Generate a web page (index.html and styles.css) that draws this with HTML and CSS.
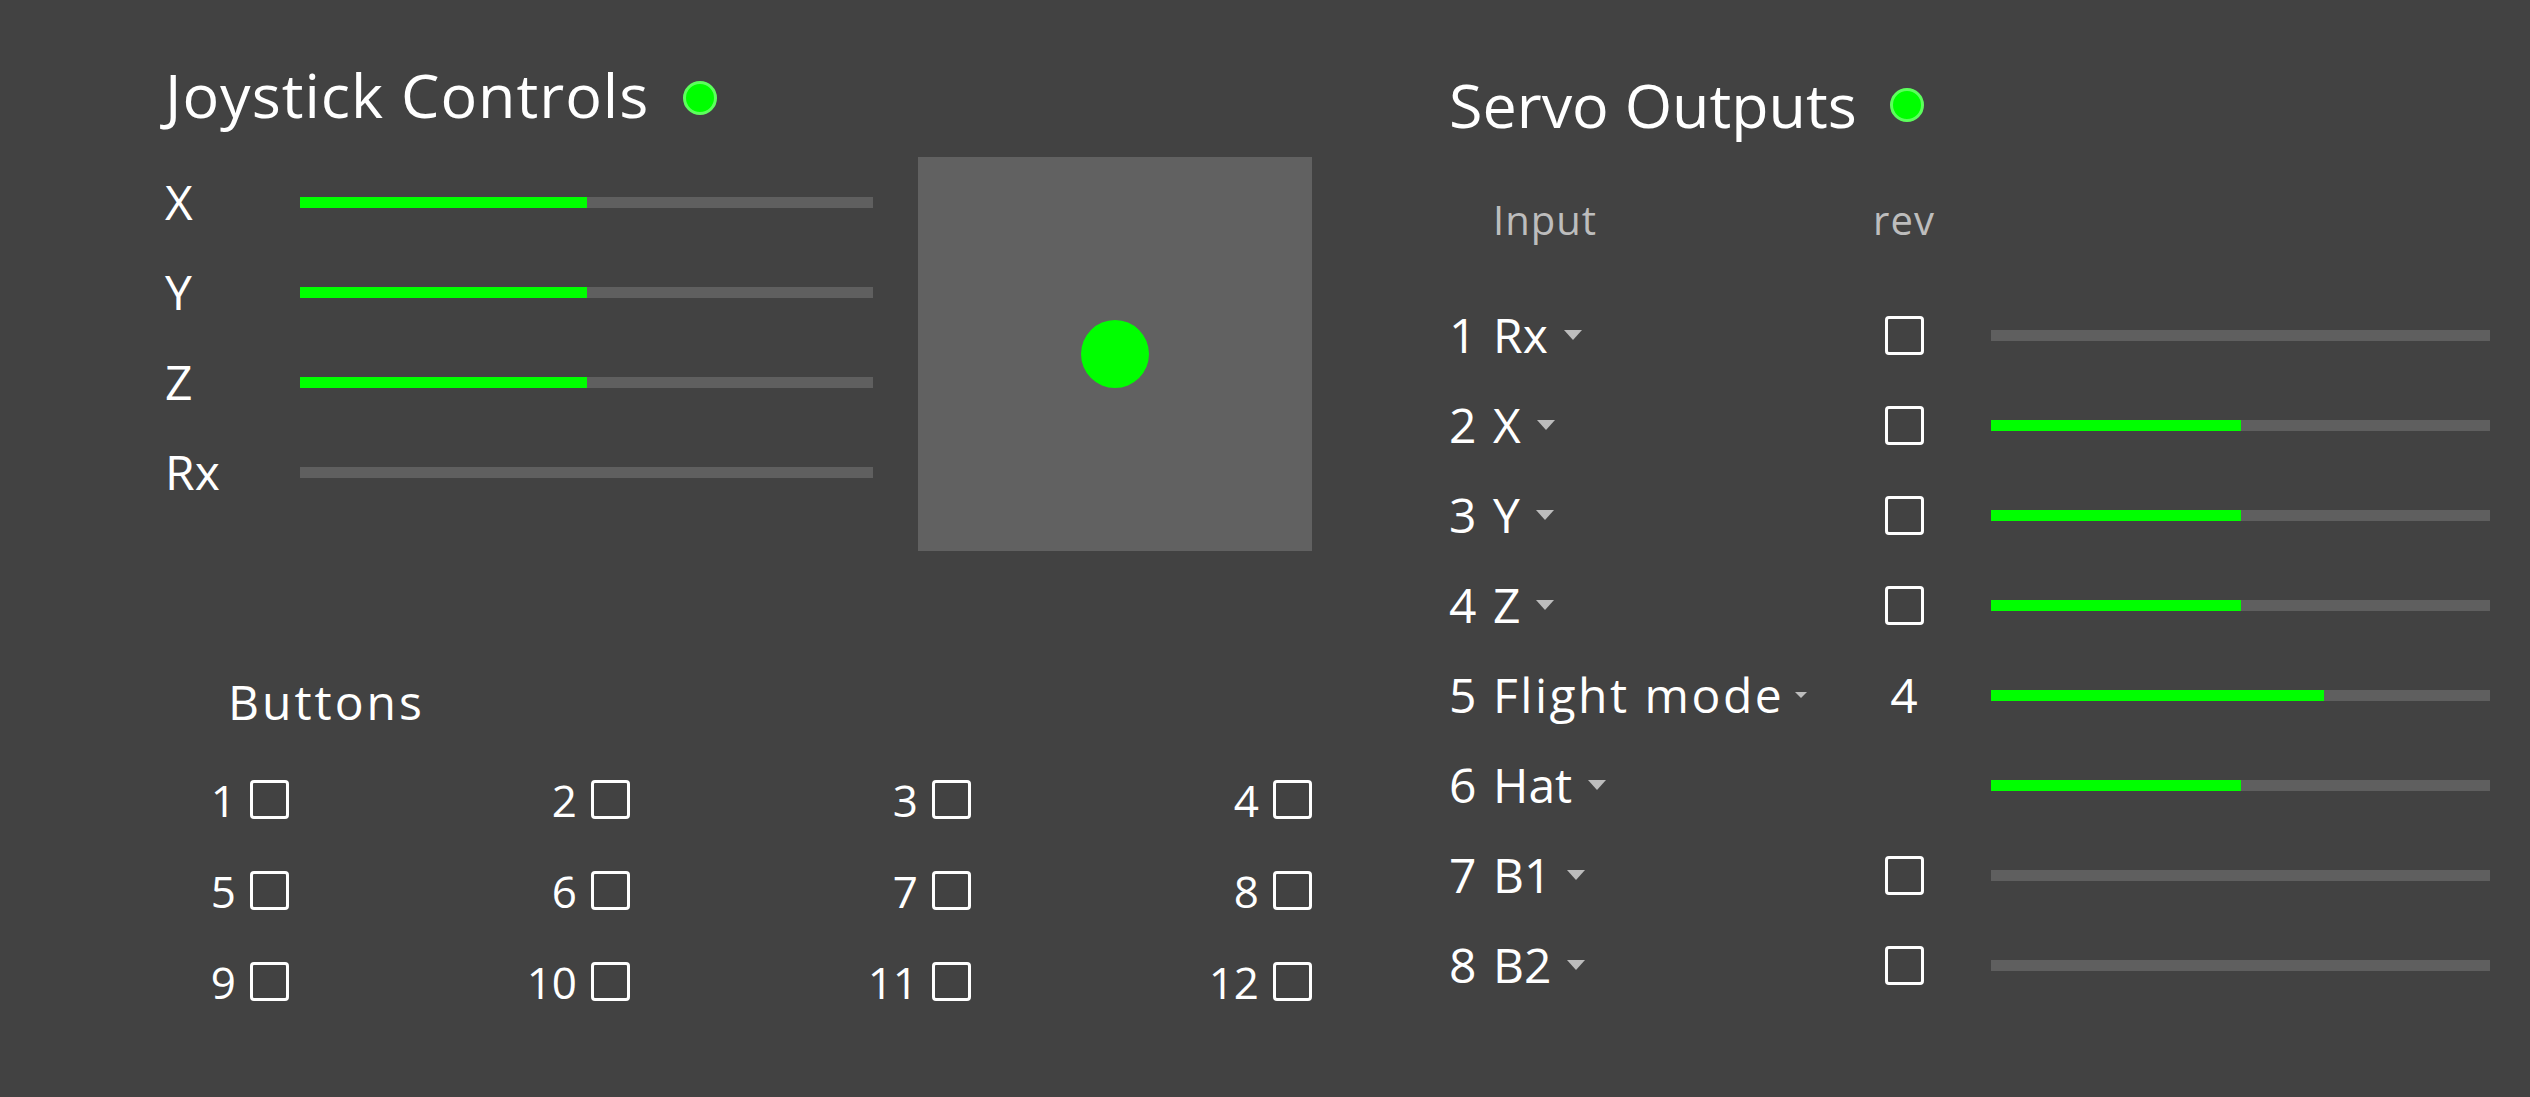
FILE: index.html
```html
<!DOCTYPE html>
<html lang="en">
<head>
<meta charset="utf-8">
<title>Joystick Servo Mapper</title>
<link rel="stylesheet" href="styles.css">
</head>
<body>
<div class="app">
  <section class="joystick">
    <div class="title-row joy-title-row">
      <h1 class="title title-wide">Joystick Controls</h1>
      <span class="led"></span>
    </div>
    <div class="axes-row">
      <div class="axes">
        <div class="axis"><span class="axis-label">X</span><div class="bar"><div class="fill" style="width:50%"></div></div></div>
        <div class="axis"><span class="axis-label">Y</span><div class="bar"><div class="fill" style="width:50%"></div></div></div>
        <div class="axis"><span class="axis-label">Z</span><div class="bar"><div class="fill" style="width:50%"></div></div></div>
        <div class="axis"><span class="axis-label">Rx</span><div class="bar"><div class="fill" style="width:0%"></div></div></div>
      </div>
      <div class="stick-pad"><span class="stick-dot"></span></div>
    </div>
    <h2 class="buttons-title">Buttons</h2>
    <div class="buttons-grid">
      <div class="btn"><span>1</span><span class="check"></span></div>
      <div class="btn"><span>2</span><span class="check"></span></div>
      <div class="btn"><span>3</span><span class="check"></span></div>
      <div class="btn"><span>4</span><span class="check"></span></div>
      <div class="btn"><span>5</span><span class="check"></span></div>
      <div class="btn"><span>6</span><span class="check"></span></div>
      <div class="btn"><span>7</span><span class="check"></span></div>
      <div class="btn"><span>8</span><span class="check"></span></div>
      <div class="btn"><span>9</span><span class="check"></span></div>
      <div class="btn"><span>10</span><span class="check"></span></div>
      <div class="btn"><span>11</span><span class="check"></span></div>
      <div class="btn"><span>12</span><span class="check"></span></div>
    </div>
  </section>

  <section class="servos">
    <div class="title-row servo-title-row">
      <h1 class="title">Servo Outputs</h1>
      <span class="led"></span>
    </div>
    <div class="servo-head">
      <span class="head-input">Input</span>
      <span class="head-rev">rev</span>
    </div>
    <div class="servo-row">
      <div class="sel"><span class="num">1</span><span class="sel-text">Rx</span><span class="caret"></span></div>
      <div class="rev"><span class="check"></span></div>
      <div class="out"><div class="bar"><div class="fill" style="width:0%"></div></div></div>
    </div>
    <div class="servo-row">
      <div class="sel"><span class="num">2</span><span class="sel-text">X</span><span class="caret"></span></div>
      <div class="rev"><span class="check"></span></div>
      <div class="out"><div class="bar"><div class="fill" style="width:50%"></div></div></div>
    </div>
    <div class="servo-row">
      <div class="sel"><span class="num">3</span><span class="sel-text">Y</span><span class="caret"></span></div>
      <div class="rev"><span class="check"></span></div>
      <div class="out"><div class="bar"><div class="fill" style="width:50%"></div></div></div>
    </div>
    <div class="servo-row">
      <div class="sel"><span class="num">4</span><span class="sel-text">Z</span><span class="caret"></span></div>
      <div class="rev"><span class="check"></span></div>
      <div class="out"><div class="bar"><div class="fill" style="width:50%"></div></div></div>
    </div>
    <div class="servo-row">
      <div class="sel"><span class="num">5</span><span class="sel-text sel-long">Flight mode</span><span class="caret caret-small"></span></div>
      <div class="rev"><span class="rev-value">4</span></div>
      <div class="out"><div class="bar"><div class="fill" style="width:66.7%"></div></div></div>
    </div>
    <div class="servo-row">
      <div class="sel"><span class="num">6</span><span class="sel-text">Hat</span><span class="caret"></span></div>
      <div class="rev"></div>
      <div class="out"><div class="bar"><div class="fill" style="width:50%"></div></div></div>
    </div>
    <div class="servo-row">
      <div class="sel"><span class="num">7</span><span class="sel-text">B1</span><span class="caret"></span></div>
      <div class="rev"><span class="check"></span></div>
      <div class="out"><div class="bar"><div class="fill" style="width:0%"></div></div></div>
    </div>
    <div class="servo-row">
      <div class="sel"><span class="num">8</span><span class="sel-text">B2</span><span class="caret"></span></div>
      <div class="rev"><span class="check"></span></div>
      <div class="out"><div class="bar"><div class="fill" style="width:0%"></div></div></div>
    </div>
  </section>
</div>
</body>
</html>
```

FILE: styles.css
```css
html, body {
  margin: 0;
  padding: 0;
  background: #424242;
}

body {
  color: #ffffff;
  font-family: "Open Sans", "Noto Sans", "DejaVu Sans", sans-serif;
}

.app {
  display: flex;
  gap: 137px;
  padding: 0 40px 0 165px;
  min-height: 1097px;
  box-sizing: border-box;
}

.joystick {
  flex: none;
  width: 1147px;
}

.servos {
  flex: 1;
  min-width: 0;
}

/* titles */
.title-row {
  display: flex;
  align-items: center;
  gap: 34px;
  height: 62px;
  margin-top: 64px;
}

.joy-title-row .led {
  margin-top: 6px;
}

.servo-title-row {
  margin-top: 74px;
  gap: 33px;
}

.title {
  margin: 0;
  font-size: 61px;
  line-height: 62px;
  font-weight: 400;
}

.title-wide {
  letter-spacing: 1px;
}

.led {
  flex: none;
  width: 28px;
  height: 28px;
  border: 3px solid #5cff5c;
  border-radius: 50%;
  background: #00ff00;
}

/* axes */
.axes-row {
  display: flex;
  align-items: flex-start;
  gap: 45px;
  margin-top: 31px;
}

.axes {
  width: 708px;
}

.axis {
  display: flex;
  align-items: center;
  height: 90px;
}

.axis-label {
  flex: none;
  width: 135px;
  font-size: 48px;
  line-height: 1;
}

.bar {
  flex: 1;
  height: 11px;
  background: #5f5f5f;
}

.fill {
  height: 100%;
  background: #00ff00;
}

.stick-pad {
  flex: none;
  width: 394px;
  height: 394px;
  background: #616161;
  display: flex;
  align-items: center;
  justify-content: center;
}

.stick-dot {
  width: 68px;
  height: 68px;
  border-radius: 50%;
  background: #00ff00;
}

/* buttons */
.buttons-title {
  margin: 127px 0 0 63px;
  font-size: 48px;
  line-height: 48px;
  font-weight: 400;
  letter-spacing: 3px;
}

.buttons-grid {
  display: grid;
  grid-template-columns: 124px repeat(3, 341px);
  grid-auto-rows: 91px;
  align-items: center;
  justify-items: end;
  margin-top: 28px;
}

.btn {
  display: flex;
  align-items: center;
  gap: 14px;
  font-size: 44px;
  line-height: 1;
}

.check {
  display: block;
  flex: none;
  width: 33px;
  height: 33px;
  border: 3px solid #ffffff;
  border-radius: 4px;
}

/* servo outputs */
.servo-head {
  display: grid;
  grid-template-columns: 405px 100px 1fr;
  margin-top: 64px;
  margin-bottom: 50px;
  font-size: 40px;
  line-height: 40px;
  color: #bdbdbd;
  letter-spacing: 1px;
}

.head-input {
  padding-left: 44px;
}

.head-rev {
  text-align: center;
}

.servo-row {
  display: grid;
  grid-template-columns: 405px 100px 1fr;
  align-items: center;
  height: 90px;
}

.sel {
  display: flex;
  align-items: center;
  font-size: 48px;
  line-height: 1;
}

.num {
  flex: none;
  width: 44px;
}

.sel-long {
  letter-spacing: 2.5px;
}

.caret {
  width: 0;
  height: 0;
  margin-left: 16px;
  border-left: 9.5px solid transparent;
  border-right: 9.5px solid transparent;
  border-top: 10px solid #bdbdbd;
}

.caret-small {
  margin-left: 11px;
  border-left-width: 6px;
  border-right-width: 6px;
  border-top-width: 6px;
}

.rev {
  display: flex;
  justify-content: center;
  align-items: center;
}

.rev-value {
  font-size: 48px;
  line-height: 1;
}

.out {
  display: flex;
  padding-left: 37px;
}
```
